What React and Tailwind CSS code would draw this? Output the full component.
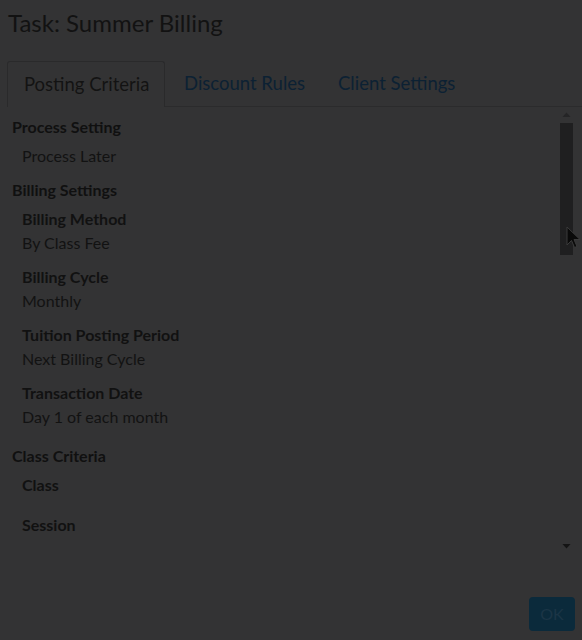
import React from "react";

const font = { fontFamily: "Lato, 'Open Sans', sans-serif" };

function Label({ children, className = "" }) {
  return (
    <div className={"pl-[22px] text-[16px] leading-[24px] font-bold text-[#111111] " + className}>
      {children}
    </div>
  );
}
function Value({ children, className = "" }) {
  return (
    <div className={"pl-[22px] text-[16px] leading-[24px] text-[#121212] " + className}>
      {children}
    </div>
  );
}
function Header({ children, className = "" }) {
  return (
    <div className={"pl-[12px] text-[16px] leading-[24px] font-bold text-[#101010] " + className}>
      {children}
    </div>
  );
}

export default function App() {
  return (
    <div className="relative w-[582px] h-[640px] bg-[#333334] overflow-hidden font-['Lato',sans-serif]" style={font}>
      <div className="pl-[8px] pt-[8px] text-[24px] leading-[30px] text-[#121212]">Task: Summer Billing</div>

      <div className="mt-[23px] flex h-[46px]">
        <div className="ml-[7px] w-[158px] h-[46px] border border-b-0 border-[#2a2a2b] rounded-t-[3px] flex items-center pl-[16px] text-[18.5px] text-[#131313]">
          Posting Criteria
        </div>
        <div className="flex-1 flex border-b border-[#2b2b2c]">
          <div className="w-[154px] flex items-center pl-[19px] text-[18.5px] text-[#0c2133]">Discount Rules</div>
          <div className="flex items-center pl-[19px] text-[18.5px] text-[#0c2133]">Client Settings</div>
        </div>
      </div>

      <div className="flex h-[448px]">
        <div className="flex-1 pt-[8px]">
          <Header>Process Setting</Header>
          <Value className="mt-[5px]">Process Later</Value>
          <Header className="mt-[10px]">Billing Settings</Header>
          <Label className="mt-[5px]">Billing Method</Label>
          <Value>By Class Fee</Value>
          <Label className="mt-[10px]">Billing Cycle</Label>
          <Value>Monthly</Value>
          <Label className="mt-[10px]">Tuition Posting Period</Label>
          <Value>Next Billing Cycle</Value>
          <Label className="mt-[10px]">Transaction Date</Label>
          <Value>Day 1 of each month</Value>
          <Header className="mt-[15px]">Class Criteria</Header>
          <Label className="mt-[5px]">Class</Label>
          <Label className="mt-[16px]">Session</Label>
        </div>
        <div className="w-[13px] mr-[9px] flex flex-col items-center">
          <svg width="9" height="6" viewBox="0 0 9 6" className="mt-[5px]">
            <polygon points="4.5,0.5 8.5,5 0.5,5" fill="#252526" />
          </svg>
          <div className="mt-[5px] w-[13px] h-[132px] bg-[#1f1f20]" />
          <div className="flex-1" />
          <svg width="9" height="6" viewBox="0 0 9 6" className="mb-[6px]">
            <polygon points="0.5,1 8.5,1 4.5,5.5" fill="#141414" />
          </svg>
        </div>
      </div>

      <div className="mt-[42px] flex justify-end pr-[7px]">
        <div className="w-[46px] h-[34px] rounded-[4px] bg-[#0b2a3b] flex items-center justify-center text-[16px] text-[#1b3546]">
          OK
        </div>
      </div>

      <svg className="absolute left-[566px] top-[226px]" width="16" height="24" viewBox="0 0 16 24">
        <path d="M1 1 L1 19 L5.5 14.5 L8.5 21.5 L11 20.5 L8 13.5 L14 13.5 Z" fill="#0a0a0a" stroke="#3a3a3a" strokeWidth="1" strokeLinejoin="round" />
      </svg>
    </div>
  );
}
